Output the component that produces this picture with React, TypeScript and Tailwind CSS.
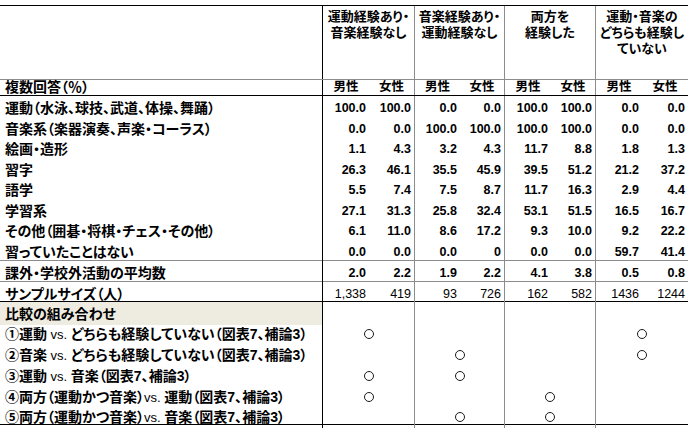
const SUB = 'grid grid-cols-[323px_46px_46px_45px_45px_46px_45px_46px_46px]';
const GRP = 'grid grid-cols-[323px_92px_90px_91px_92px]';
const GRAY = 'border-[#8c8c8c]';

const groups = [
  ['運動経験あり・', '音楽経験なし'],
  ['音楽経験あり・', '運動経験なし'],
  ['両方を', '経験した'],
  ['運動・音楽の', 'どちらも経験し', 'ていない'],
];

const rows: { label: string; values: string[]; h: string }[] = [
  { label: '運動（水泳、球技、武道、体操、舞踊）', values: ['100.0', '100.0', '0.0', '0.0', '100.0', '100.0', '0.0', '0.0'], h: 'h-[21px]' },
  { label: '音楽系（楽器演奏、声楽・コーラス）', values: ['0.0', '0.0', '100.0', '100.0', '100.0', '100.0', '0.0', '0.0'], h: 'h-[20px]' },
  { label: '絵画・造形', values: ['1.1', '4.3', '3.2', '4.3', '11.7', '8.8', '1.8', '1.3'], h: 'h-[21px]' },
  { label: '習字', values: ['26.3', '46.1', '35.5', '45.9', '39.5', '51.2', '21.2', '37.2'], h: 'h-[20px]' },
  { label: '語学', values: ['5.5', '7.4', '7.5', '8.7', '11.7', '16.3', '2.9', '4.4'], h: 'h-[21px]' },
  { label: '学習系', values: ['27.1', '31.3', '25.8', '32.4', '53.1', '51.5', '16.5', '16.7'], h: 'h-[20px]' },
  { label: 'その他（囲碁・将棋・チェス・その他）', values: ['6.1', '11.0', '8.6', '17.2', '9.3', '10.0', '9.2', '22.2'], h: 'h-[21px]' },
  { label: '習っていたことはない', values: ['0.0', '0.0', '0.0', '0', '0.0', '0.0', '59.7', '41.4'], h: 'h-[21px] border-b ' + GRAY },
  { label: '課外・学校外活動の平均数', values: ['2.0', '2.2', '1.9', '2.2', '4.1', '3.8', '0.5', '0.8'], h: 'h-[21px] border-b ' + GRAY },
];

const sample = ['1,338', '419', '93', '726', '162', '582', '1436', '1244'];

const comparisons: { label: React.ReactNode; marks: boolean[]; h: string }[] = [
  { label: <>①運動<Vs />どちらも経験していない（図表7、補論3）</>, marks: [true, false, false, true], h: 'h-[21px]' },
  { label: <>②音楽<Vs />どちらも経験していない（図表7、補論3）</>, marks: [false, true, false, true], h: 'h-[21px]' },
  { label: <>③運動<Vs />音楽（図表7、補論3）</>, marks: [true, true, false, false], h: 'h-[21px]' },
  { label: <>④両方（運動かつ音楽）<Vs lead={false} />運動（図表7、補論3）</>, marks: [true, false, true, false], h: 'h-[20px]' },
  { label: <>⑤両方（運動かつ音楽）<Vs lead={false} />音楽（図表7、補論3）</>, marks: [false, true, true, false], h: 'h-[20px] border-b border-black' },
];

function Vs({ lead = true }: { lead?: boolean }) {
  return <span className="font-normal text-[13px]">{lead ? ' vs. ' : 'vs. '}</span>;
}

const subBorder = (i: number) => (i === 1 || i === 3 || i === 5 ? 'border-r ' + GRAY : '');
const grpBorder = (i: number) => (i < 3 ? 'border-r ' + GRAY : '');

const Label = ({ children, bg = '' }: { children: React.ReactNode; bg?: string }) => (
  <div className={`flex items-center pl-[5px] pt-[2px] text-[14px] border-r border-black whitespace-pre ${bg}`}>{children}</div>
);

const Circle = () => <span className="block w-[10px] h-[10px] rounded-full border-[1.5px] border-[#1a1a1a]" />;

export default function App() {
  return (
    <div className="w-[688px] h-[430px] bg-white pt-[5px] text-black text-[12.5px] font-bold font-['Liberation_Sans','Noto_Sans_CJK_JP',sans-serif] [font-feature-settings:'palt'] overflow-hidden">
      {/* 見出し */}
      <div className={`${GRP} h-[75px] border-t border-b border-t-black ${GRAY}`}>
        <div className="border-r border-black" />
        {groups.map((g, i) => (
          <div key={i} className={`pt-[3px] text-center text-[13px] leading-[16px] whitespace-nowrap ${grpBorder(i)}`}>
            {g.map((l) => (
              <div key={l}>{l}</div>
            ))}
          </div>
        ))}
      </div>

      <div className={`${SUB} h-[16px] border-b border-black leading-[15px]`}>
        <div className="pl-[5px] text-[14px] leading-[15px] border-r border-black">複数回答（％）</div>
        {[0, 1, 2, 3, 4, 5, 6, 7].map((i) => (
          <div key={i} className={`text-center ${subBorder(i)}`}>
            {i % 2 === 0 ? '男性' : '女性'}
          </div>
        ))}
      </div>

      {rows.map((r) => (
        <div key={r.label} className={`${SUB} ${r.h}`}>
          <Label>{r.label}</Label>
          {r.values.map((v, i) => (
            <div key={i} className={`flex items-center justify-end pr-[3px] pt-[2px] ${subBorder(i)}`}>
              {v}
            </div>
          ))}
        </div>
      ))}

      <div className={`${SUB} h-[20px] border-b border-black`}>
        <Label>サンプルサイズ（人）</Label>
        {sample.map((v, i) => (
          <div key={i} className={`flex items-center justify-end pr-[3px] pt-[2px] font-normal ${subBorder(i)}`}>
            {v}
          </div>
        ))}
      </div>

      {/* 比較の組み合わせ */}
      <div className={`${GRP} h-[20px]`}>
        <Label bg="bg-[#eeece1]">比較の組み合わせ</Label>
        {[0, 1, 2, 3].map((i) => (
          <div key={i} className={grpBorder(i)} />
        ))}
      </div>

      {comparisons.map((c, n) => (
        <div key={n} className={`${GRP} ${c.h}`}>
          <Label>{c.label}</Label>
          {c.marks.map((m, i) => (
            <div key={i} className={`flex items-center justify-center pt-[1px] ${grpBorder(i)}`}>
              {m && <Circle />}
            </div>
          ))}
        </div>
      ))}
    </div>
  );
}
